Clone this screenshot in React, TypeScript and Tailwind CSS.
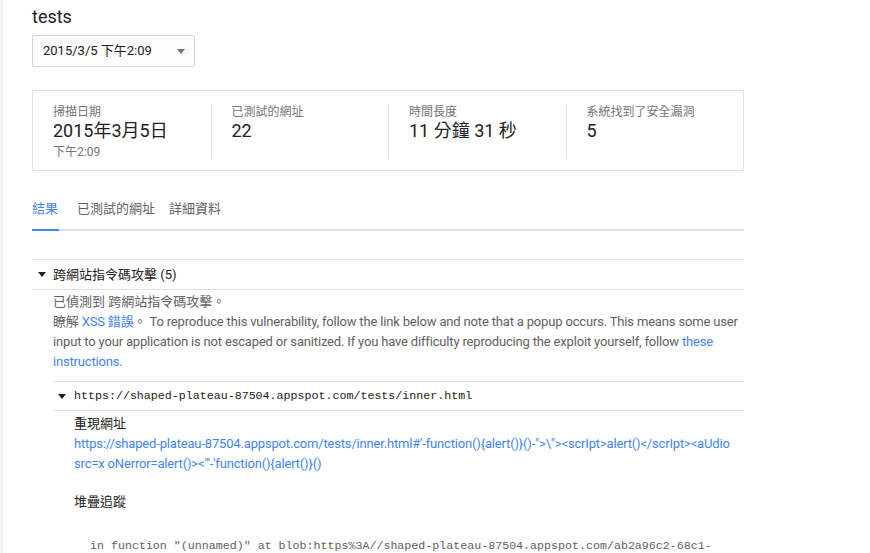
import React from "react";

const sans = { fontFamily: 'Roboto, "Noto Sans CJK TC", sans-serif' };

interface Stat {
  label: string;
  value: string;
  sub?: string;
}

const stats: Stat[] = [
  { label: "掃描日期", value: "2015年3月5日", sub: "下午2:09" },
  { label: "已測試的網址", value: "22" },
  { label: "時間長度", value: "11 分鐘 31 秒" },
  { label: "系統找到了安全漏洞", value: "5" },
];

const Caret = ({ className = "" }: { className?: string }) => (
  <svg width="8" height="5" viewBox="0 0 8 5" className={className}>
    <path d="M0 0h8L4 5z" fill="currentColor" />
  </svg>
);

const App = () => {
  return (
    <div
      className="min-h-screen bg-white border-l-[3px] border-[#f2f2f2] pl-[29px] text-[#212121]"
      style={sans}
    >
      <div className="w-[712px]">
        <h1 className="pt-[5px] text-[18px] leading-[24px] font-normal">tests</h1>

        <div className="mt-[6px] flex h-[32px] w-[163px] items-center justify-between rounded-[2px] border border-[#d6d6d6] bg-[#fcfcfc] pl-[10px] pr-[9px] text-[13px]">
          <span>2015/3/5 下午2:09</span>
          <Caret className="text-[#757575]" />
        </div>

        {/* summary */}
        <section className="mt-[23px] grid h-[81px] grid-cols-4 items-start border border-[#e3e3e3] pt-[13px]">
          {stats.map((s, i) => (
            <div
              key={s.label}
              className={
                i === 0
                  ? "pl-[20px]"
                  : "h-[55px] border-l border-[#e3e3e3] pl-[20px]"
              }
            >
              <p className="text-[12px] leading-[16px] text-[#757575]">{s.label}</p>
              <p className="text-[18px] leading-[22px]">{s.value}</p>
              {s.sub && (
                <p className="mt-[2px] text-[12px] leading-[16px] text-[#757575]">
                  {s.sub}
                </p>
              )}
            </div>
          ))}
        </section>

        {/* tabs */}
        <nav className="mt-[28px] flex border-b-2 border-[#e0e0e0] text-[13px] leading-[20px]">
          <div className="-mb-[2px] border-b-2 border-[#4285f4] pb-[10px] pr-[1px] text-[#4285f4]">
            結果
          </div>
          <div className="ml-[18px] pb-[10px] text-[#616161]">已測試的網址</div>
          <div className="ml-[14px] pb-[10px] text-[#616161]">詳細資料</div>
        </nav>

        {/* result group */}
        <section className="mt-[28px]">
          <div className="flex h-[31px] items-center border-y border-[#e3e3e3] pl-[6px] text-[13px]">
            <Caret className="text-[#212121]" />
            <span className="ml-[7px]">跨網站指令碼攻擊 (5)</span>
          </div>

          <div className="pl-[21px] pt-[2px] text-[13px] leading-[20px] text-[#616161]">
            <p>已偵測到 跨網站指令碼攻擊。</p>
            <p className="tracking-[-0.17px]">
              瞭解 <span className="text-[#4285f4]">XSS 錯誤</span>。{" "}
              To reproduce this vulnerability, follow the link below and note that a popup
              occurs. This means some user input to your application is not escaped or
              sanitized. If you have difficulty reproducing the exploit yourself, follow{" "}
              <span className="text-[#4285f4]">these instructions</span>.
            </p>

            <div className="mt-[9px]">
              <div className="flex h-[30px] items-center border-y border-[#e3e3e3] pl-[5px] text-[#212121]">
                <Caret />
                <span
                  className="ml-[8px] text-[11.65px]"
                  style={{ fontFamily: '"Liberation Mono", monospace' }}
                >
                  https://shaped-plateau-87504.appspot.com/tests/inner.html
                </span>
              </div>

              <div className="pl-[21px] pt-[3px]">
                <p className="text-[#212121]">重現網址</p>
                <p className="tracking-[-0.17px] text-[#4285f4]">
                  {`https://shaped-plateau-87504.appspot.com/tests/inner.html#'-function(){alert()}()-">\\"><scrIpt>alert()</scrIpt><aUdio src=x oNerror=alert()><"'-'function(){alert()}()`}
                </p>

                <p className="mt-[18px] text-[#212121]">堆疊追蹤</p>

                <p
                  className="mt-[24px] whitespace-pre pl-[16px] text-[11.65px] text-[#616161]"
                  style={{ fontFamily: '"Liberation Mono", monospace' }}
                >
                  {`in function "(unnamed)" at blob:https%3A//shaped-plateau-87504.appspot.com/ab2a96c2-68c1-`}
                </p>
              </div>
            </div>
          </div>
        </section>
      </div>
    </div>
  );
};

export default App;
